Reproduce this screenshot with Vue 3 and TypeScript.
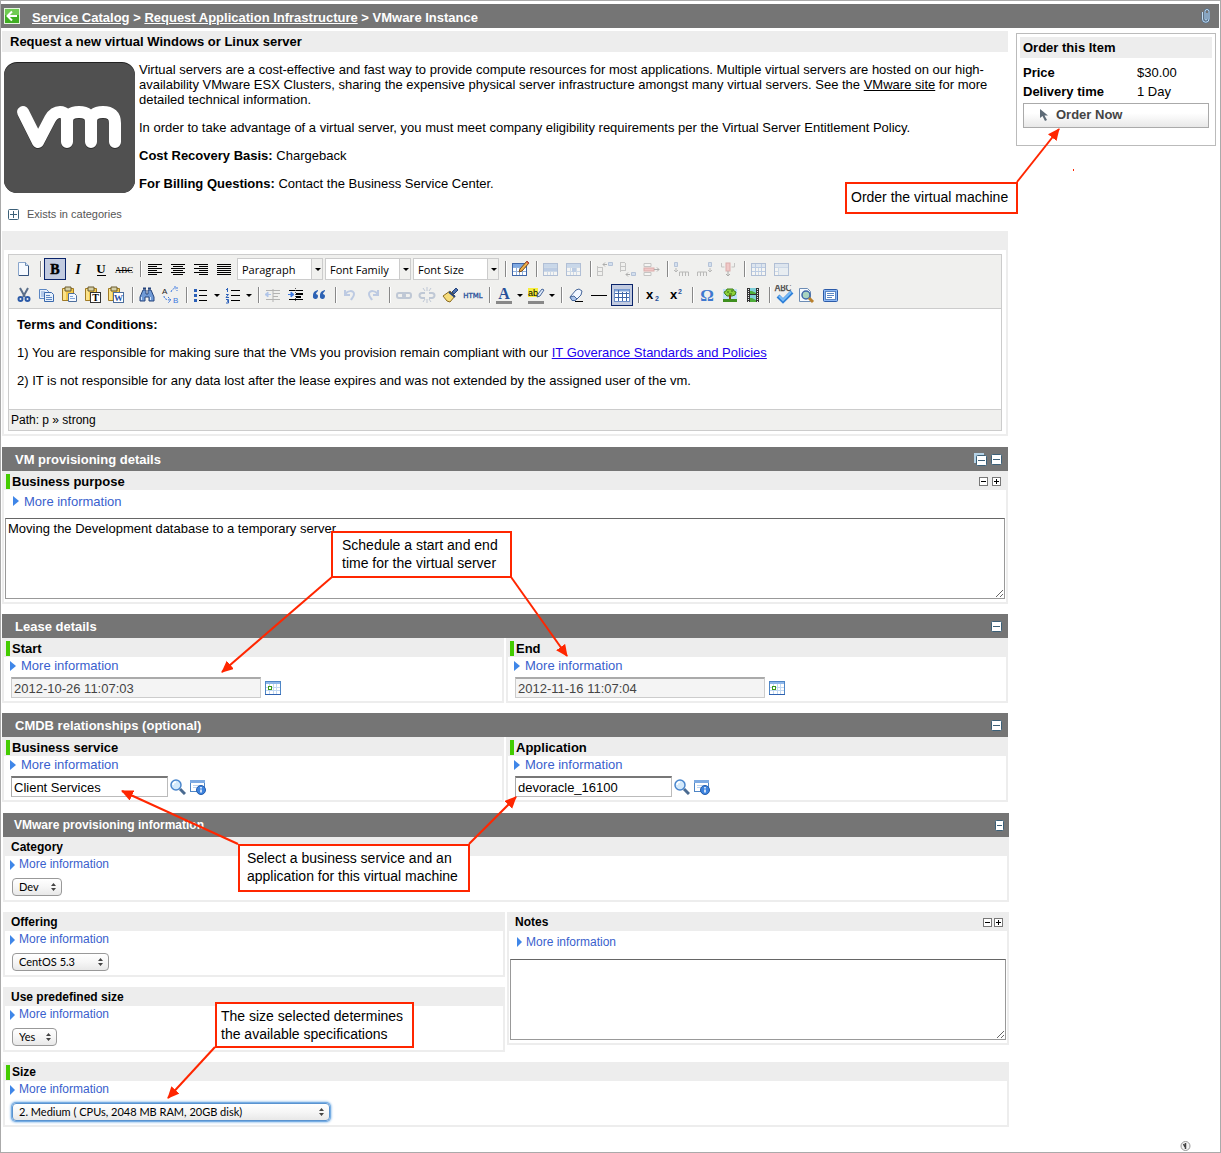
<script setup lang="ts">
import { ref } from 'vue'

type ToolKind = 'button' | 'sep' | 'select'

interface Tool {
  kind: ToolKind
  name: string
  active?: boolean
  split?: boolean
  dim?: boolean
}

interface LookupField {
  id: string
  label: string
  value: string
}

interface Arrow {
  x1: number
  y1: number
  x2: number
  y2: number
}

const bars = (left: number[], widths: number[]): string =>
  widths
    .map((w, i) => `<rect x="${left[i % left.length]}" y="${5 + i * 2}" width="${w}" height="1" fill="#000"/>`)
    .join('')

const clipboard = `<path d="M2.5 3.5h11v12h-11z" fill="#f2c84b" stroke="#a07a24"/><path d="M3 4h3v11H3z" fill="#fbe38a"/><path d="M5 2h6v4H5z" fill="#d4cfa8" stroke="#6b5a2a"/>`

const table = (head: string): string =>
  `<rect x="2.5" y="4.5" width="14" height="12" fill="#fff" stroke="#3f66a8"/>
   <rect x="3" y="5" width="13" height="3" fill="${head}"/>
   <path d="M3 8.5h13M3 12.5h13M6.5 8v8M9.5 8v8M12.5 8v8" stroke="#8fb0dc"/>`

const icons: Record<string, string> = {
  'New document': `<path d="M4.5 3.5h7l3 3v10h-10z" fill="#f6faff" stroke="#8aa6cc"/><path d="M11.5 3.5v3h3" fill="#cfe0f4" stroke="#6d8db5"/><path d="M5 16.5h9.5V7" fill="none" stroke="#34527c"/>`,
  Bold: `<text x="10" y="15" text-anchor="middle" font-family="Liberation Serif,serif" font-size="14" font-weight="bold" stroke="#000" stroke-width=".5">B</text>`,
  Italic: `<text x="10" y="15" text-anchor="middle" font-family="Liberation Serif,serif" font-size="14" font-weight="bold" font-style="italic">I</text>`,
  Underline: `<text x="10" y="14" text-anchor="middle" font-family="Liberation Serif,serif" font-size="13" font-weight="bold">U</text><rect x="6" y="16" width="9" height="1"/>`,
  Strikethrough: `<text x="10" y="14" text-anchor="middle" font-family="Liberation Serif,serif" font-size="9">ABC</text><rect x="2" y="11" width="16" height="1"/>`,
  'Align left': bars([3], [14, 9, 14, 9, 14, 9]),
  'Align center': bars([3, 5], [14, 10, 14, 10, 14, 10]),
  'Align right': bars([3, 8], [14, 9, 14, 9, 14, 9]),
  'Align full': bars([3], [14, 14, 14, 14, 14, 14]),
  'Edit table': table('#7fa9e2') + `<path d="M9 13l1-3 7-8 2 2-7 8z" fill="#f0b24a" stroke="#7a4a18"/><path d="M16 3l1-1 2 2-1 1z" fill="#d9534a"/>`,
  'Row properties': table('#7fa9e2') + `<rect x="3" y="9" width="13" height="3" fill="#5d8ad0"/>`,
  'Cell properties': table('#7fa9e2') + `<rect x="8" y="9" width="4" height="4" fill="#5d8ad0"/>`,
  'Row before': `<path d="M2.5 7v10M2 8.5h5M2 12.5h5M2 16.5h5M7.5 8v9" fill="none" stroke="#777"/><path d="M13.5 3.5h4v3h-4z" fill="#9fc0ee" stroke="#4a72b0"/><path d="M8 5.500h4M10 3.500L8 5.5l2 2" stroke="#333" fill="none"/>`,
  'Row after': `<path d="M2.5 3v10M2 3.5h5M2 7.5h5M2 11.5h5M7.5 4v8" fill="none" stroke="#777"/><path d="M13.5 13.5h4v3h-4z" fill="#9fc0ee" stroke="#4a72b0"/><path d="M8 15.5h4M10 13.5l-2 2 2 2" stroke="#333" fill="none"/>`,
  'Delete row': `<path d="M3 4.5h7v3H3zM3 13.5h7v3H3z" fill="#fff" stroke="#777"/><rect x="3" y="9" width="10" height="3" fill="#f08080" stroke="#b33"/><path d="M13 10.5h5M16 8.5l2 2-2 2" stroke="#333" fill="none"/>`,
  'Column before': `<path d="M2.5 3.500h3v4h-3z" fill="#9fc0ee" stroke="#4a72b0"/><path d="M4 9v4M2 11l2 2 2-2M7.5 17v-4h9v4M10.5 13v4M13.5 13v4" stroke="#555" fill="none"/>`,
  'Column after': `<path d="M13.5 3.500h3v4h-3z" fill="#9fc0ee" stroke="#4a72b0"/><path d="M15 9v4M13 11l2 2 2-2M2.5 17v-4h9v4M5.5 13v4M8.5 13v4" stroke="#555" fill="none"/>`,
  'Delete column': `<path d="M3.500 4v4h3M16.500 4v4h-3" fill="none" stroke="#777"/><rect x="8" y="4" width="4" height="8" fill="#f08080" stroke="#b33"/><path d="M10 12v5M8 15l2 2 2-2" stroke="#333" fill="none"/>`,
  'Split cells': table('#bcd2f0') + `<path d="M3 8.5h13M3 12.5h13M6.5 5v11M12.5 5v11" stroke="#5d8ad0"/>`,
  'Merge cells': table('#bcd2f0') + `<rect x="7" y="9" width="9" height="7" fill="#dce8f8"/>`,
  Cut: `<path d="M6 3l5 9M14 3l-5 9" stroke="#5b6f8a" stroke-width="2"/><circle cx="6.5" cy="14" r="2" fill="none" stroke="#2c5ba8" stroke-width="2"/><circle cx="13.5" cy="14" r="2" fill="none" stroke="#2c5ba8" stroke-width="2"/>`,
  Copy: `<path d="M2.5 4.5h7l2 2v7h-9z" fill="#e6f0fc" stroke="#5b86c2"/><path d="M4 7h4M4 9h4M4 11h4" stroke="#7fa3d8"/><path d="M7.5 7.5h7l2 2v7h-9z" fill="#e6f0fc" stroke="#3a69ad"/><path d="M9 10.5h4M9 12.5h6M9 14.5h6" stroke="#5b86c2"/>`,
  Paste: clipboard + `<path d="M8.5 8.5h6l2 2v6h-8z" fill="#f4f8ff" stroke="#4d6e9c"/><path d="M10 11.5h3M10 13.5h5" stroke="#7fa3d8"/>`,
  'Paste text': clipboard + `<rect x="7.5" y="7.5" width="10" height="10" fill="#fff" stroke="#333"/><text x="12.5" y="16" text-anchor="middle" font-family="Liberation Serif,serif" font-size="10" font-weight="bold">T</text>`,
  'Paste from Word': clipboard + `<rect x="7.5" y="7.5" width="10" height="10" fill="#fff" stroke="#4d6e9c"/><text x="12.5" y="16" text-anchor="middle" font-family="Liberation Serif,serif" font-size="9" font-weight="bold" fill="#1f4fa8">W</text>`,
  Find: `<path d="M6 5h3v4h2V5h3l3 7v4h-5v-4H8v4H3v-4z" fill="#6f9ad6" stroke="#27457c"/><path d="M6 3.5h3M11 3.5h3" stroke="#27457c" stroke-width="2"/><path d="M4.5 12v3M13.5 12v3" stroke="#d4e4fa"/>`,
  Replace: `<text x="2" y="9" font-family="Liberation Sans,sans-serif" font-size="8" fill="#222">A</text><text x="13" y="18" font-family="Liberation Sans,sans-serif" font-size="8" fill="#3c78e0">B</text><path d="M11 7c1-3 3-4 5-3M14 2h3v4M4 11c0 3 3 4 6 4M8 12l3 3-3 3" fill="none" stroke="#3c78e0" stroke-dasharray="2 1"/>`,
  'Bullet list': `<path d="M3 4h3v3H3zM3 9h3v3H3zM3 14h3v3H3z" fill="#2a5fb8"/><path d="M8 5.5h8M8 10.5h8M8 15.5h8" stroke="#000"/>`,
  'Numbered list': `<path d="M4.5 3v4M3 4.5h2M3 9.5h2.5L3 12.5h3M3 14.5h2.5v1.5H4h1.5v2H3" fill="none" stroke="#2a5fb8"/><path d="M8 5.5h9M8 10.5h9M8 15.5h9" stroke="#000"/>`,
  Outdent: `<path d="M3 5.5h14M10 8.5h7M10 11.5h5M3 14.5h14M10 4v13" stroke="#444"/><path d="M8 9.5H3M5 7L2 9.5 5 12z" fill="#3c78e0" stroke="#3c78e0"/>`,
  Indent: `<path d="M3 5.5h14M10 8.5h7M10 11.5h5M3 14.5h14" stroke="#000"/><path d="M10 9h7M10 12h5" stroke="#000" stroke-width="2"/><path d="M9.5 3v14" stroke="#555" stroke-dasharray="1 1"/><path d="M2 9.5h4M5 7l3 2.5L5 12z" fill="#3c78e0" stroke="#3c78e0"/>`,
  Blockquote: `<path d="M9 5C5 6 4 8 4 11a2.5 2.5 0 1 0 3-2c0-1 1-2 2-3zM16 5c-4 1-5 3-5 6a2.5 2.5 0 1 0 3-2c0-1 1-2 2-3z" fill="#2d62b4"/>`,
  Undo: `<path d="M5 5v5h5M5 10c2-5 9-5 9-1 0 3-2 4-3 6" fill="none" stroke="#5f86cc" stroke-width="2"/>`,
  Redo: `<path d="M15 5v5h-5M15 10c-2-5-9-5-9-1 0 3 2 4 3 6" fill="none" stroke="#5f86cc" stroke-width="2"/>`,
  Link: `<rect x="3" y="8" width="8" height="5" rx="2" fill="none" stroke="#667fa8" stroke-width="2"/><rect x="9" y="8" width="8" height="5" rx="2" fill="none" stroke="#667fa8" stroke-width="2"/>`,
  Unlink: `<path d="M8 8H5a2 2 0 0 0 0 5h3M12 8h3a2 2 0 0 1 0 5h-3" fill="none" stroke="#667fa8" stroke-width="2"/><path d="M10 2v4M6 3l2 3M14 3l-2 3M10 18v-4M6 17l2-3M14 17l-2-3" fill="none" stroke="#667fa8"/>`,
  'Clean up': `<path d="M12 7l4-4 2 2-4 4z" fill="#4a6fae" stroke="#27457c"/><path d="M3 11l7-5 5 5-5 6-3-1z" fill="#f6dc7a" stroke="#8a6a20"/><path d="M9 7l6 5" stroke="#27457c" stroke-width="2"/>`,
  HTML: `<text x="10" y="13" text-anchor="middle" font-family="DejaVu Sans,sans-serif" font-size="7" fill="#27509a" stroke="#27509a" stroke-width=".3">HTML</text>`,
  'Text color': `<text x="10" y="14" text-anchor="middle" font-family="Liberation Serif,serif" font-size="16" font-weight="bold" fill="#27509a">A</text><rect x="2" y="16" width="16" height="3" fill="#888"/>`,
  'Background color': `<rect x="2" y="3" width="10" height="9" fill="#f7ee3a"/><text x="2" y="11" font-family="Liberation Sans,sans-serif" font-size="9">ab</text><path d="M11 12l1-3 4-5 2 1-4 6z" fill="#dfeafa" stroke="#46669a"/><rect x="2" y="16" width="16" height="3" fill="#888"/>`,
  'Remove formatting': `<path d="M4 12l6-7 3-1 3 2-1 4-5 5H6z" fill="#f2f7ff" stroke="#46669a"/><path d="M4 12l4-1 3 3-2 1.5H6z" fill="#a9c3ea" stroke="#46669a"/><path d="M9 16.5h8" stroke="#000"/>`,
  'Horizontal rule': `<rect x="2" y="10" width="16" height="1"/>`,
  'Toggle guidelines': `<rect x="2.5" y="4.5" width="15" height="12" fill="#fff" stroke="#6f90c8"/><path d="M3 5.5h14" stroke="#7fa3d8" stroke-width="2"/><path d="M3 8.5h14M3 12.5h14M6.5 5v11M10.5 7v9M14.5 7v9" stroke="#3f66a8"/>`,
  Subscript: `<text x="3" y="14" font-family="Liberation Sans,sans-serif" font-size="13" font-weight="bold">x</text><text x="12" y="16" font-family="Liberation Sans,sans-serif" font-size="7" font-weight="bold" fill="#27509a">2</text>`,
  Superscript: `<text x="4" y="14" font-family="Liberation Sans,sans-serif" font-size="13" font-weight="bold">x</text><text x="12" y="9" font-family="Liberation Sans,sans-serif" font-size="7" font-weight="bold" fill="#27509a">2</text>`,
  'Special character': `<text x="10" y="16" text-anchor="middle" font-family="Liberation Serif,serif" font-size="17" font-weight="bold" fill="#3f78cf">Ω</text>`,
  Image: `<rect x="3" y="4" width="14" height="13" fill="#bfe0fa"/><path d="M5 9l-1-2 2-1 1-2h3l3 0 1 2 2 1-1 3-3 1H7z" fill="#8ccf3a" stroke="#3f7f1a"/><path d="M7 7h2M11 6h2M9 9h3" stroke="#2f6a12"/><path d="M9 10h2v5H9z" fill="#7a4a18"/><rect x="3" y="14" width="14" height="3" fill="#3f8f1e"/>`,
  Media: `<path d="M4 3h12v14H4z" fill="#333"/><path d="M7 3h6v6H7zM7 10h6v7H7z" fill="#7fcfd8"/><path d="M7 6l2 0 4 2v1H7zM7 13h2l4 2v2H7z" fill="#4fae3a"/><path d="M5.5 4v13M14.5 4v13" stroke="#eee" stroke-dasharray="1 1"/>`,
  Spellcheck: `<text x="9" y="6" text-anchor="middle" font-family="DejaVu Sans,sans-serif" font-size="8" fill="#444" stroke="#444" stroke-width=".3">ABC</text><path d="M4 11l5 5 9-9" fill="none" stroke="#2d7fd8" stroke-width="4"/><path d="M5 11l4 4 8-8" fill="none" stroke="#79bcf7" stroke-width="2"/>`,
  Preview: `<path d="M2.5 3.5h8l3 3v10h-11z" fill="#f6faff" stroke="#6d8db5"/><circle cx="9" cy="10" r="4" fill="#a9d3c0" stroke="#3f66a8" stroke-width="1.5"/><path d="M12 13l4 4" stroke="#b9802c" stroke-width="3"/>`,
  'Full screen': `<rect x="3.5" y="4.5" width="14" height="12" rx="1" fill="#8db8f4" stroke="#2c5ba8"/><rect x="5.5" y="6.5" width="10" height="8" fill="#fff" stroke="#5b86c2"/><path d="M7 8.5h7M7 10.5h7M7 12.5h5" stroke="#5b86c2"/>`,
}

const b = (name: string, extra: Partial<Tool> = {}): Tool => ({ kind: 'button', name, ...extra })
const s = (): Tool => ({ kind: 'sep', name: '' })
const d = (name: string): Tool => ({ kind: 'select', name })
const off = { dim: true }

const toolbar: Tool[][] = [
  [
    b('New document'), s(), b('Bold', { active: true }), b('Italic'), b('Underline'), b('Strikethrough'), s(),
    b('Align left'), b('Align center'), b('Align right'), b('Align full'),
    d('Paragraph'), d('Font Family'), d('Font Size'), s(),
    b('Edit table'), s(), b('Row properties', off), b('Cell properties', off), s(),
    b('Row before', off), b('Row after', off), b('Delete row', off), s(),
    b('Column before', off), b('Column after', off), b('Delete column', off), s(),
    b('Split cells', off), b('Merge cells', off),
  ],
  [
    b('Cut'), b('Copy'), b('Paste'), b('Paste text'), b('Paste from Word'), s(),
    b('Find'), b('Replace'), s(), b('Bullet list', { split: true }), b('Numbered list', { split: true }), s(),
    b('Outdent', off), b('Indent'), b('Blockquote'), s(), b('Undo', off), b('Redo', off), s(),
    b('Link', off), b('Unlink', off), b('Clean up'), b('HTML'), s(),
    b('Text color', { split: true }), b('Background color', { split: true }), s(),
    b('Remove formatting'), b('Horizontal rule'), b('Toggle guidelines', { active: true }), s(),
    b('Subscript'), b('Superscript'), s(), b('Special character'), b('Image'), b('Media'), s(),
    b('Spellcheck'), b('Preview'), b('Full screen'),
  ],
]

const lease: LookupField[] = [
  { id: 'start', label: 'Start', value: '2012-10-26 11:07:03' },
  { id: 'end', label: 'End', value: '2012-11-16 11:07:04' },
]
const cmdb = ref<LookupField[]>([
  { id: 'service', label: 'Business service', value: 'Client Services' },
  { id: 'application', label: 'Application', value: 'devoracle_16100' },
])

const sizing = [
  { id: 'offering', label: 'Offering', value: 'CentOS 5.3', cls: 'w-mid' },
  { id: 'predefined', label: 'Use predefined size', value: 'Yes', cls: 'w-small' },
]

const purpose = ref('Moving the Development database to a temporary server')
const notes = ref('')

const arrows: Arrow[] = [
  { x1: 1017, y1: 182, x2: 1059, y2: 129 },
  { x1: 332, y1: 577, x2: 222, y2: 672 },
  { x1: 511, y1: 577, x2: 567, y2: 656 },
  { x1: 238, y1: 844, x2: 122, y2: 791 },
  { x1: 469, y1: 844, x2: 516, y2: 797 },
  { x1: 215, y1: 1047, x2: 168, y2: 1098 },
]
</script>

<template>
  <div class="page">
    <header class="topbar">
      <button type="button" class="plain" aria-label="Back">
        <svg width="16" height="16" viewBox="0 0 16 16">
          <rect x="0.5" y="0.5" width="15" height="15" fill="#3fae22" stroke="#e4f6dd" />
          <path d="M1 1h14v6H1z" fill="#6fcb52" />
          <path d="M13 8H4M8 3.5L3.5 8 8 12.5" fill="none" stroke="#fff" stroke-width="2" />
        </svg>
      </button>
      <nav class="crumbs"><a href="#">Service Catalog</a> &gt; <a href="#">Request Application Infrastructure</a> &gt; VMware Instance</nav>
      <button type="button" class="plain clip" aria-label="Attachments">
        <svg width="10" height="16" viewBox="0 0 10 16">
          <path d="M1.5 4v7a3 3 0 0 0 6.500 0V3.5a2 2 0 0 0-4 0V11a1 1 0 0 0 2 0V5" fill="none" stroke="#4f6f8f" stroke-width="2" />
          <path d="M1.5 4v7a3 3 0 0 0 6.500 0V3.5a2 2 0 0 0-4 0V11a1 1 0 0 0 2 0V5" fill="none" stroke="#c3def5" />
        </svg>
      </button>
    </header>

    <div class="columns">
      <main class="main">
        <h1 class="title">Request a new virtual Windows or Linux server</h1>
        <section class="intro">
          <svg class="logo" width="131" height="131" viewBox="0 0 131 131" role="img" aria-label="vm">
            <rect width="131" height="131" rx="13" fill="#222" />
            <rect y="1" width="131" height="130" rx="13" fill="#505050" />
            <g fill="none" stroke-width="12" stroke-linecap="round" stroke-linejoin="round">
              <path transform="translate(0 1)" stroke="#2e2e2e" d="M19 50L34 80 46 57Q50 50 56 50 63 50 63 59V80M63 60Q63 50 75 50 87 50 87 60V80M87 60Q87 50 99 50 111 50 111 61V80" />
              <path stroke="#fff" d="M19 50L34 80 46 57Q50 50 56 50 63 50 63 59V80M63 60Q63 50 75 50 87 50 87 60V80M87 60Q87 50 99 50 111 50 111 61V80" />
            </g>
          </svg>
          <div class="copy">
            <p>Virtual servers are a cost-effective and fast way to provide compute resources for most applications. Multiple virtual servers are hosted on our high-availability VMware ESX Clusters, sharing the expensive physical server infrastructure amongst many virtual servers. See the <a href="#">VMware site</a> for more detailed technical information.</p>
            <p>In order to take advantage of a virtual server, you must meet company eligibility requirements per the Virtual Server Entitlement Policy.</p>
            <p><b>Cost Recovery Basis:</b> Chargeback</p>
            <p><b>For Billing Questions:</b> Contact the Business Service Center.</p>
          </div>
        </section>
        <button type="button" class="plain exists">
          <svg width="11" height="11" viewBox="0 0 11 11"><rect x="0.5" y="0.5" width="10" height="10" rx="1" fill="#fff" stroke="#3c6078" /><path d="M2 5.5h7M5.5 2v7" stroke="#3c6078" /></svg>
          Exists in categories
        </button>

        <section class="terms">
          <div class="terms-band"></div>
          <div class="editor">
            <div class="toolbar">
              <div v-for="(row, r) in toolbar" :key="r" class="tool-row">
                <template v-for="(tool, i) in row" :key="i">
                  <span v-if="tool.kind === 'sep'" class="sep"></span>
                  <span v-else-if="tool.kind === 'select'" class="tool-select">
                    <select :aria-label="tool.name"><option>{{ tool.name }}</option></select>
                    <span class="tri"></span>
                  </span>
                  <template v-else>
                    <button type="button" class="tool" :class="{ active: tool.active, dim: tool.dim }" :aria-label="tool.name">
                      <svg width="20" height="20" viewBox="0 0 20 20" v-html="icons[tool.name]"></svg>
                    </button>
                    <button v-if="tool.split" type="button" class="split" :aria-label="tool.name + ' options'"><span class="tri"></span></button>
                  </template>
                </template>
              </div>
            </div>
            <div class="document">
              <p><b>Terms and Conditions:</b></p>
              <p>1) You are responsible for making sure that the VMs you provision remain compliant with our <a href="#">IT Goverance Standards and Policies</a></p>
              <p>2) IT is not responsible for any data lost after the lease expires and was not extended by the assigned user of the vm.</p>
            </div>
            <div class="status">Path: p » strong</div>
          </div>
        </section>

        <section class="group first">
          <h2 class="bar">
            <span>VM provisioning details</span>
            <button type="button" class="plain" aria-label="Collapse all">
              <svg width="13" height="13" viewBox="0 0 13 13"><path d="M0 0h10v10H0z" fill="#b5d2e6" /><rect x="2.5" y="2.5" width="10" height="10" rx="1" fill="#fff" stroke="#3c6078" /><path d="M4 7.5h7" stroke="#3c6078" /></svg>
            </button>
            <button type="button" class="plain" aria-label="Collapse">
              <svg width="11" height="11" viewBox="0 0 11 11"><rect x="0.5" y="0.5" width="10" height="10" rx="1" fill="#fff" stroke="#3c6078" /><path d="M2 5.5h7" stroke="#3c6078" /></svg>
            </button>
          </h2>
          <div class="cell">
            <div class="label required">
              <label for="purpose">Business purpose</label>
              <button type="button" class="step" aria-label="Shrink"><svg width="9" height="9" viewBox="0 0 9 9"><path d="M2 4.5h5" stroke="#000" /></svg></button>
              <button type="button" class="step" aria-label="Grow"><svg width="9" height="9" viewBox="0 0 9 9"><path d="M2 4.5h5M4.5 2v5" stroke="#000" /></svg></button>
            </div>
            <a href="#" class="more tall">More information</a>
            <textarea id="purpose" v-model="purpose"></textarea>
          </div>
        </section>

        <section class="group">
          <h2 class="bar">
            <span>Lease details</span>
            <button type="button" class="plain" aria-label="Collapse">
              <svg width="11" height="11" viewBox="0 0 11 11"><rect x="0.5" y="0.5" width="10" height="10" rx="1" fill="#fff" stroke="#3c6078" /><path d="M2 5.5h7" stroke="#3c6078" /></svg>
            </button>
          </h2>
          <div class="pair">
            <div v-for="f in lease" :key="f.id" class="cell">
              <div class="label required"><label :for="f.id">{{ f.label }}</label></div>
              <a href="#" class="more">More information</a>
              <div class="control">
                <input :id="f.id" type="text" class="date" :value="f.value" readonly />
                <button type="button" class="plain cal" :aria-label="'Pick ' + f.label">
                  <svg width="16" height="16" viewBox="0 0 16 16">
                    <rect x="0.5" y="1.5" width="15" height="13" fill="#fff" stroke="#4f86c6" />
                    <path d="M1 2h14v2H1z" fill="#8fb8ea" />
                    <path d="M1 7.5h14M1 10.5h14M4.5 4v10M8.5 4v10M11.5 4v10" stroke="#c3d9f2" />
                    <path d="M0 14.5h16" stroke="#2f62b0" />
                    <rect x="3.5" y="6.5" width="3" height="3" fill="#fff" stroke="#3c9a1a" />
                  </svg>
                </button>
              </div>
            </div>
          </div>
        </section>

        <section class="group">
          <h2 class="bar">
            <span>CMDB relationships (optional)</span>
            <button type="button" class="plain" aria-label="Collapse">
              <svg width="11" height="11" viewBox="0 0 11 11"><rect x="0.5" y="0.5" width="10" height="10" rx="1" fill="#fff" stroke="#3c6078" /><path d="M2 5.5h7" stroke="#3c6078" /></svg>
            </button>
          </h2>
          <div class="pair">
            <div v-for="f in cmdb" :key="f.id" class="cell">
              <div class="label required"><label :for="f.id">{{ f.label }}</label></div>
              <a href="#" class="more">More information</a>
              <div class="control">
                <input :id="f.id" v-model="f.value" type="text" class="lookup" />
                <button type="button" class="plain find" :aria-label="'Look up ' + f.label">
                  <svg width="16" height="16" viewBox="0 0 16 16">
                    <path d="M10 10l5 5" stroke="#4a6a90" stroke-width="3" />
                    <circle cx="6" cy="6" r="5" fill="#d3e9fb" stroke="#4a86cc" stroke-width="1.5" />
                    <path d="M3 6a3 3 0 0 1 3-3" fill="none" stroke="#fff" stroke-width="1.5" />
                  </svg>
                </button>
                <button type="button" class="plain cal" :aria-label="'View ' + f.label">
                  <svg width="16" height="16" viewBox="0 0 16 16">
                    <rect x="0.5" y="1.5" width="14" height="11" fill="#fff" stroke="#4f86c6" />
                    <path d="M0 1h15v3H0z" fill="#7eabe3" />
                    <path d="M3 6.5h8M3 8.5h4" stroke="#b9d3f2" />
                    <circle cx="11" cy="11" r="4.5" fill="#3d83de" stroke="#245cab" />
                    <path d="M11 8v1.5M11 10.5v3" stroke="#fff" stroke-width="1.5" />
                  </svg>
                </button>
              </div>
            </div>
          </div>
        </section>

        <section class="group lower">
          <h2 class="bar">
            <span>VMware provisioning information</span>
            <button type="button" class="plain" aria-label="Collapse">
              <svg width="9" height="11" viewBox="0 0 9 11"><rect x="0.5" y="0.5" width="8" height="10" rx="1" fill="#fff" stroke="#3c6078" /><path d="M2 5.5h5" stroke="#3c6078" /></svg>
            </button>
          </h2>
          <div class="cell">
            <div class="label"><label for="category">Category</label></div>
            <a href="#" class="more">More information</a>
            <div class="control">
              <span class="pop w-tiny">
                <select id="category"><option>Dev</option></select>
                <svg width="5" height="8" viewBox="0 0 5 8"><path d="M0 3L2.5 0 5 3zM0 5l2.5 3L5 5z" fill="#444" /></svg>
              </span>
            </div>
          </div>
          <div class="pair spaced">
            <div class="stack">
              <div v-for="f in sizing" :key="f.id" class="cell">
                <div class="label"><label :for="f.id">{{ f.label }}</label></div>
                <a href="#" class="more">More information</a>
                <div class="control">
                  <span class="pop" :class="f.cls">
                    <select :id="f.id"><option>{{ f.value }}</option></select>
                    <svg width="5" height="8" viewBox="0 0 5 8"><path d="M0 3L2.5 0 5 3zM0 5l2.5 3L5 5z" fill="#444" /></svg>
                  </span>
                </div>
              </div>
            </div>
            <div class="cell">
              <div class="label">
                <label for="notes">Notes</label>
                <button type="button" class="step" aria-label="Shrink"><svg width="9" height="9" viewBox="0 0 9 9"><path d="M2 4.5h5" stroke="#000" /></svg></button>
                <button type="button" class="step" aria-label="Grow"><svg width="9" height="9" viewBox="0 0 9 9"><path d="M2 4.5h5M4.5 2v5" stroke="#000" /></svg></button>
              </div>
              <a href="#" class="more tall">More information</a>
              <textarea id="notes" v-model="notes"></textarea>
            </div>
          </div>
          <div class="cell spaced">
            <div class="label required"><label for="size">Size</label></div>
            <a href="#" class="more">More information</a>
            <div class="control">
              <span class="pop focus w-wide">
                <select id="size"><option>2. Medium ( CPUs, 2048 MB RAM, 20GB disk)</option></select>
                <svg width="5" height="8" viewBox="0 0 5 8"><path d="M0 3L2.5 0 5 3zM0 5l2.5 3L5 5z" fill="#444" /></svg>
              </span>
            </div>
          </div>
        </section>
      </main>

      <aside class="order">
        <h2>Order this Item</h2>
        <dl>
          <dt>Price</dt><dd>$30.00</dd>
          <dt>Delivery time</dt><dd>1 Day</dd>
        </dl>
        <button type="button" class="order-now">
          <svg width="8" height="12" viewBox="0 0 8 12"><path d="M0 0v9l2.5-2 2.5 5 2-1-2.5-4.5H8z" fill="#5d6a76" /></svg>
          Order Now
        </button>
      </aside>
    </div>

    <footer class="footer">
      <svg width="11" height="12" viewBox="0 0 11 12"><circle cx="5.5" cy="6" r="4.5" fill="#f4f4f4" stroke="#999" /><path d="M5.5 9V3M5 7L3.5 4" fill="none" stroke="#444" stroke-width="1.5" /></svg>
    </footer>

    <div class="notes-layer">
      <svg class="arrows">
        <defs>
          <marker id="head" markerUnits="userSpaceOnUse" markerWidth="12" markerHeight="12" refX="11" refY="5.5" orient="auto">
            <path d="M0 0L12 5.5 0 11z" fill="#ff2600" />
          </marker>
        </defs>
        <line v-for="(a, i) in arrows" :key="i" v-bind="a" stroke="#ff2600" stroke-width="2" marker-end="url(#head)" />
        <rect x="1073" y="169" width="1" height="2" fill="#ff2600" />
      </svg>
      <div class="callout c-order">Order the virtual machine</div>
      <div class="callout c-schedule">Schedule a start and end<br />time for the virtual server</div>
      <div class="callout c-service">Select a business service and an<br />application for this virtual machine</div>
      <div class="callout c-size">The size selected determines<br />the available specifications</div>
    </div>
  </div>
</template>

<style>
body {
  margin: 0;
  background: #fff;
}
</style>

<style scoped>
* {
  box-sizing: border-box;
}
.page {
  position: relative;
  border: 1px solid #aaa;
  padding-top: 3px;
  font: 13px/15px "Liberation Sans", Arial, sans-serif;
  color: #000;
}
svg {
  display: block;
  flex: none;
}
h1,
h2,
p,
dl,
dd {
  margin: 0;
  font-size: 13px;
}
.plain {
  border: 0;
  padding: 0;
  background: none;
  font: inherit;
  color: inherit;
  flex: none;
}
.topbar {
  display: flex;
  align-items: center;
  height: 24px;
  margin-right: 1px;
  padding: 0 8px 0 3px;
  background: #757575;
  color: #fff;
  font-weight: bold;
}
.crumbs {
  margin-left: 12px;
  padding-top: 2px;
  flex: 1;
}
.crumbs a {
  color: #fff;
}
.columns {
  display: flex;
  align-items: flex-start;
  gap: 8px;
  padding: 3px 4px 0 1px;
}
.main {
  flex: 1;
  min-width: 0;
}
.title {
  height: 21px;
  padding-left: 8px;
  line-height: 21px;
  background: #ededed;
}
.intro {
  display: flex;
  gap: 4px;
  padding: 10px 8px 0 2px;
}
.copy p + p,
.document p + p {
  margin-top: 13px;
}
.copy a {
  color: #000;
}
.exists {
  display: flex;
  align-items: center;
  gap: 8px;
  margin: 14px 0 0 6px;
  font-size: 11px;
  color: #555;
}
.terms {
  margin-top: 9px;
  border: solid #ededed;
  border-width: 0 2px 2px;
}
.terms-band {
  height: 19px;
  background: #ededed;
}
.editor {
  margin: 4px 4px 3px;
  border: 1px solid #ccc;
}
.toolbar {
  display: flex;
  flex-direction: column;
  gap: 4px;
  padding: 3px 4px 2px;
  background: #f0f0ee;
  border-bottom: 1px solid #ccc;
}
.tool-row {
  display: flex;
  height: 22px;
}
.tool {
  width: 22px;
  height: 22px;
  margin-right: 1px;
  padding: 0;
  border: 1px solid transparent;
  background: none;
  flex: none;
}
.tool.active {
  border-color: #0a246a;
  background: #c2cbe0;
}
.tool.dim svg {
  opacity: 0.35;
}
.split {
  display: flex;
  align-items: center;
  justify-content: center;
  width: 8px;
  margin-right: 1px;
  padding: 0;
  border: 0;
  background: none;
  flex: none;
}
.tri {
  border: 3px solid transparent;
  border-top-color: #000;
  border-bottom: 0;
}
.sep {
  width: 8px;
  height: 16px;
  margin-top: 3px;
  flex: none;
  background: linear-gradient(90deg, transparent 4px, #888 4px, #888 5px, #fff 5px, #fff 6px, transparent 6px);
}
.tool-select {
  position: relative;
  width: 86px;
  height: 22px;
  margin-right: 2px;
  flex: none;
}
.tool + .tool-select {
  margin-left: 1px;
}
.tool-select select {
  appearance: none;
  width: 100%;
  height: 22px;
  padding: 0 12px 0 4px;
  border: 1px solid #ccc;
  border-radius: 0;
  background: linear-gradient(90deg, #fff 73px, #ccc 73px, #ccc 74px, #f0f0ee 74px);
  font: 11px "Open Sans", sans-serif;
  color: #000;
}
.tool-select .tri {
  position: absolute;
  right: 2px;
  top: 10px;
}
.document {
  min-height: 100px;
  padding: 8px;
}
.document a {
  color: #20e;
}
.status {
  height: 21px;
  padding-left: 2px;
  border-top: 1px solid #ccc;
  background: #f0f0ee;
  font-size: 12px;
  line-height: 20px;
}
.group {
  margin-top: 10px;
}
.first {
  margin-top: 11px;
}
.bar {
  display: flex;
  align-items: center;
  gap: 4px;
  height: 24px;
  padding: 0 6px 0 13px;
  background: #757575;
  color: #fff;
}
.bar span {
  flex: 1;
}
.cell {
  border: solid #ededed;
  border-width: 0 2px 2px;
}
.pair {
  display: grid;
  grid-template-columns: 1fr 1fr;
  align-items: start;
  gap: 2px;
}
.label {
  display: flex;
  align-items: center;
  gap: 4px;
  height: 19px;
  padding: 2px 5px 0 6px;
  background: #ededed;
  font-weight: bold;
}
.label label {
  flex: 1;
}
.label.required {
  padding-left: 2px;
}
.label.required label {
  padding-left: 2px;
  border-left: 4px solid #4c0;
}
.step {
  width: 9px;
  height: 9px;
  padding: 0;
  border: 0;
  outline: 1px solid #777;
  outline-offset: -1px;
  background: #fff;
}
.more {
  display: flex;
  align-items: center;
  gap: 5px;
  height: 17px;
  padding-left: 6px;
  color: #3a5fcd;
  text-decoration: none;
}
.more::before {
  content: "";
  border: 5px solid transparent;
  border-left: 6px solid #3f86e8;
  border-right: 0;
}
.more.tall {
  height: 22px;
  padding-left: 9px;
}
.control {
  display: flex;
  align-items: center;
  height: 27px;
  padding-left: 7px;
}
.control input {
  height: 21px;
  padding: 0 2px;
  border: 1px solid #ccc;
  border-top: 2px solid #aaa;
  font: inherit;
  color: #000;
}
.control .date {
  width: 250px;
  background: #f4f4f4;
  color: #444;
}
.control .lookup {
  width: 157px;
  border-color: #777 #bbb #bbb #aaa;
}
.control .find {
  margin-left: 2px;
}
.cal {
  margin-left: 4px;
}
textarea {
  display: block;
  width: calc(100% - 2px);
  height: 81px;
  margin: 6px 1px 3px;
  padding: 2px;
  border: 1px solid #999;
  border-top-color: #666;
  font: inherit;
}
.lower {
  margin: 11px -1px 0 1px;
  font-size: 12px;
}
.lower .bar {
  padding: 0 5px 0 11px;
  font-size: 12px;
}
.lower .label {
  gap: 2px;
  padding-right: 4px;
}
.lower .required {
  padding-left: 1px;
}
.spaced {
  margin-top: 10px;
}
.stack {
  display: flex;
  flex-direction: column;
  gap: 10px;
}
.lower .more {
  gap: 4px;
  padding-left: 5px;
}
.lower .more.tall {
  padding-left: 8px;
}
.lower .more::before {
  border-left-width: 5px;
}
.pop {
  position: relative;
  height: 18px;
}
.pop select {
  appearance: none;
  display: block;
  width: 100%;
  height: 18px;
  padding: 0 6px;
  border: 1px solid #999;
  border-radius: 4px;
  background: linear-gradient(#fff, #f6f6f6 50%, #e8e8e8);
  font: 11px Lato, sans-serif;
  color: #000;
}
.pop svg {
  position: absolute;
  right: 6px;
  top: 5px;
}
.pop.focus select {
  border-color: #5a93cf;
  box-shadow: 0 0 0 1px #78aee4, 0 0 2px 2px #b5d4f2;
}
.w-tiny {
  width: 50px;
}
.w-small {
  width: 45px;
}
.w-mid {
  width: 97px;
}
.w-wide {
  width: 318px;
}
.order {
  width: 200px;
  height: 113px;
  margin-top: 2px;
  padding: 3px;
  border: 1px solid #bbb;
  flex: none;
}
.order h2 {
  height: 21px;
  padding-left: 3px;
  background: #ededed;
  line-height: 21px;
}
.order dl {
  display: grid;
  grid-template-columns: 114px 1fr;
  margin: 5px 3px 2px;
  line-height: 19px;
}
.order dt {
  font-weight: bold;
}
.order-now {
  display: flex;
  align-items: center;
  gap: 8px;
  width: 186px;
  height: 25px;
  margin-left: 3px;
  padding: 0 16px 2px;
  border: 1px solid #aaa;
  background: linear-gradient(#fff 40%, #e8e8e8);
  font: bold 13px "Liberation Sans", Arial, sans-serif;
  color: #444;
}
.footer {
  display: flex;
  justify-content: flex-end;
  align-items: flex-end;
  height: 25px;
  padding-right: 29px;
}
.notes-layer {
  position: absolute;
  inset: -1px;
  pointer-events: none;
}
.arrows {
  width: 100%;
  height: 100%;
}
.callout {
  position: absolute;
  border: 2px solid #ff2600;
  background: #fff;
  font-size: 14px;
  line-height: 18px;
  white-space: nowrap;
}
.c-order {
  left: 845px;
  top: 182px;
  width: 173px;
  padding: 4px 4px 6px;
}
.c-schedule {
  left: 331px;
  top: 531px;
  width: 181px;
  padding: 3px 9px 4px;
}
.c-service {
  left: 238px;
  top: 844px;
  width: 232px;
  padding: 3px 7px 5px;
}
.c-size {
  left: 215px;
  top: 1002px;
  width: 199px;
  padding: 3px 4px;
}
</style>
